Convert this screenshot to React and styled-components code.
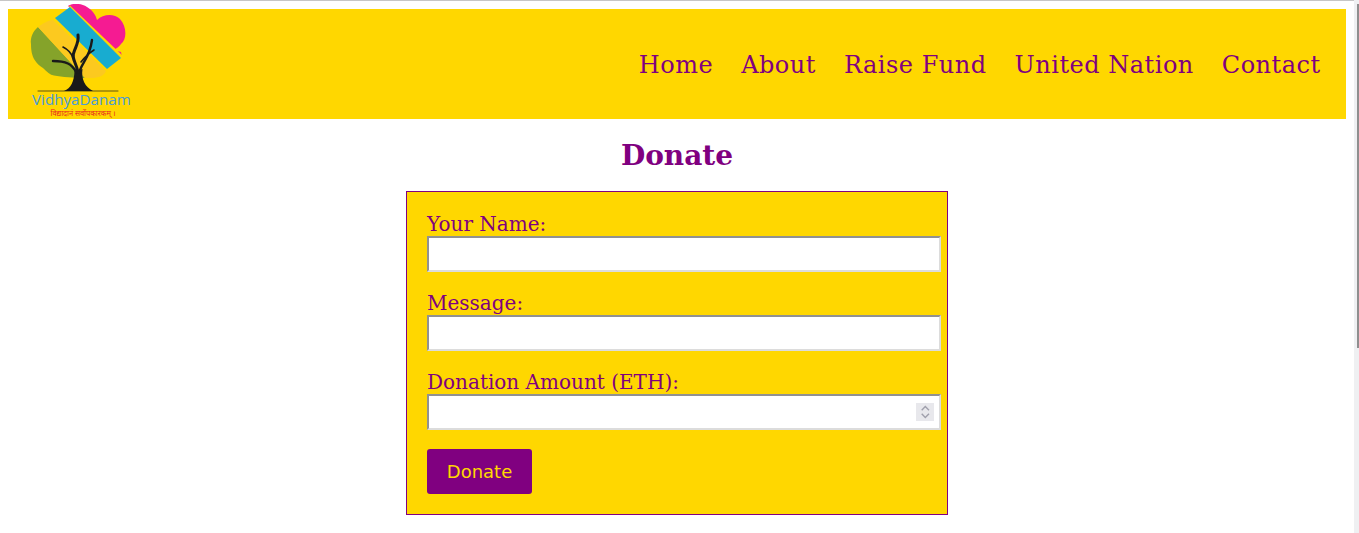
import React from 'react';
import styled, { createGlobalStyle } from 'styled-components';

const GlobalStyle = createGlobalStyle`
  body {
    margin: 0;
    background: #fff;
    font-family: "DejaVu Serif", serif;
    color: #800080;
    overflow: hidden;
  }
`;

const Wrapper = styled.div`
  margin-right: 5px;
`;

const TopLine = styled.div`
  height: 1px;
  background: #c6c6c6;
`;

const Page = styled.div`
  padding: 8px;
`;

const ScrollTrack = styled.div`
  position: fixed;
  top: 0;
  right: 0;
  bottom: 0;
  width: 5px;
  background: #eff0f2;
`;

const ScrollThumb = styled.div`
  position: absolute;
  top: 4px;
  right: 0;
  width: 2px;
  height: 344px;
  background: #8f8f8f;
`;

const Header = styled.header`
  display: flex;
  align-items: center;
  justify-content: space-between;
  height: 110px;
  background-color: #ffd700;
  padding: 0 25.4px 0 17px;
`;

const Logo = styled.svg`
  display: block;
  width: 110px;
  height: 116px;
  margin-top: -4px;
  margin-bottom: 1px;
  flex: none;
`;

const Nav = styled.nav`
  display: flex;
  gap: 28px;
  padding-top: 1px;
`;

const NavLink = styled.a`
  font-size: 24px;
  letter-spacing: 0.5px;
  color: #800080;
  text-decoration: none;
`;

const Title = styled.h2`
  margin: 18px 0 16px;
  text-align: center;
  font-size: 28px;
  line-height: 38px;
  font-weight: bold;
  color: #800080;
`;

const Form = styled.form`
  box-sizing: content-box;
  width: 500px;
  margin: 0 auto;
  padding: 20px;
  border: 1px solid #800080;
  background-color: #ffd700;
`;

const Field = styled.div`
  margin-bottom: 19px;
`;

const Label = styled.label`
  display: block;
  height: 24px;
  font-size: 20px;
  line-height: 24px;
  color: #800080;
`;

const InputWrap = styled.div`
  position: relative;
  width: 514px;
`;

const Input = styled.input`
  display: block;
  box-sizing: border-box;
  width: 514px;
  height: 36px;
  padding: 5px;
  border: 2px solid;
  border-color: #919191 #dcdcdc #dcdcdc #919191;
  background: #fff;
  font-size: 16px;
  outline: none;
  appearance: textfield;

  &::-webkit-inner-spin-button {
    appearance: none;
    margin: 0;
  }
`;

const Spinner = styled.svg`
  position: absolute;
  top: 9px;
  right: 7px;
  width: 18px;
  height: 18px;
  background: #e8e8ec;
  pointer-events: none;
`;

const Button = styled.button`
  display: block;
  width: 105px;
  height: 45px;
  padding: 0;
  border: none;
  border-radius: 3px;
  background-color: #800080;
  color: #ffd700;
  font-family: "DejaVu Sans", sans-serif;
  font-size: 18px;
`;

const LogoName = styled.text`
  font-family: "Open Sans", sans-serif;
  font-size: 15.2px;
  fill: #4a9bd8;
`;

const LogoMotto = styled.text`
  font-family: "Noto Sans", sans-serif;
  font-size: 7.4px;
  fill: #e8261f;
`;

const LogoMark = () => (
  <Logo viewBox="25 4 110 116" aria-label="VidhyaDanam">
    <path
      fill="#f51b92"
      d="M68 6 C72 3 81 3 87 7 C92 10 96 15 97 20 C103 14 114 13 120 19 C127 27 127 39 121 44 C119 47 116 49 113 50 L121 52 L122 57 Z"
    />
    <path fill="#ffd700" d="M70 5.5 L123 56 L122 58 L69 7 Z" />
    <path
      fill="#85a32a"
      d="M38 27 C33 31 30 38 31 44 C31 51 32 55 34 59 C37 64 40 66 43 68 C47 72 50 75 54 75.5 C62 77 74 78 85 78 Z"
    />
    <path
      fill="#fcc91f"
      d="M38 27 C42 24 48 20 53 20 L106 71 C104 76 98 78 92 78 L85 78 Z"
    />
    <path fill="#18acd0" d="M70 7 L121 58 L107 69 L55 18 Z" />
    <path fill="#1a1a1a" d="M64 91 C71 88 74 82 74.5 71 L82.5 69 C81 79 85 87 93 91 Z" />
    <g fill="none" stroke="#1a1a1a" strokeLinecap="round">
      <path strokeWidth="3" d="M78 72 C76 62 71 58 74 52 C76 46 79 42 78 35" />
      <path strokeWidth="2.4" d="M80 70 C83 62 90 56 92 40" />
      <path strokeWidth="1.6" d="M81 62 C85 57 89 53 94 50" />
      <path strokeWidth="2.4" d="M76 72 C72 64 66 61 53 61" />
      <path strokeWidth="1.6" d="M73 58 C71 52 67 49 63 47" />
      <path strokeWidth="0.7" d="M38 91 L118 91" />
    </g>
    <LogoName x="32" y="104.5">VidhyaDanam</LogoName>
    <LogoMotto x="50.5" y="116">विद्यादानं सर्वोपकारकम् ।</LogoMotto>
  </Logo>
);

const links = ['Home', 'About', 'Raise Fund', 'United Nation', 'Contact'];

const App = () => (
  <>
    <GlobalStyle />
    <Wrapper>
      <TopLine />
      <Page>
        <Header>
          <LogoMark />
          <Nav>
            {links.map((link) => (
              <NavLink href="#" key={link}>{link}</NavLink>
            ))}
          </Nav>
        </Header>
        <Title>Donate</Title>
        <Form onSubmit={(e) => e.preventDefault()}>
          <Field>
            <Label htmlFor="name">Your Name:</Label>
            <Input id="name" type="text" />
          </Field>
          <Field>
            <Label htmlFor="message">Message:</Label>
            <Input id="message" type="text" />
          </Field>
          <Field>
            <Label htmlFor="amount">Donation Amount (ETH):</Label>
            <InputWrap>
              <Input id="amount" type="number" />
              <Spinner viewBox="0 0 18 18" aria-hidden="true">
                <path d="M5.7 7.3 L9.3 3.6 L13 7.3 M5.7 10.7 L9.3 14.4 L13 10.7" fill="none" stroke="#a0a0ac" strokeWidth="1.4" />
              </Spinner>
            </InputWrap>
          </Field>
          <Button type="submit">Donate</Button>
        </Form>
      </Page>
    </Wrapper>
    <ScrollTrack>
      <ScrollThumb />
    </ScrollTrack>
  </>
);

export default App;
